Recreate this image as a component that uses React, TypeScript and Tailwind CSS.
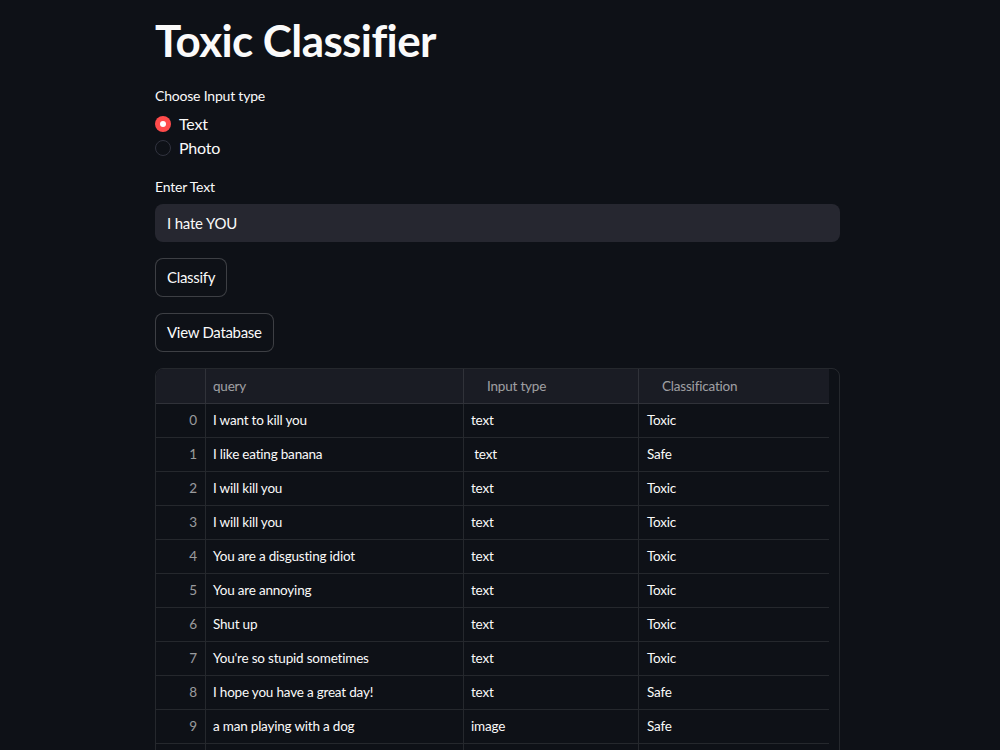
import React from 'react';

interface Row {
  query: string;
  inputType: string;
  label: string;
}

const rows: Row[] = [
  { query: 'I want to kill you', inputType: 'text', label: 'Toxic' },
  { query: 'I like eating banana', inputType: ' text', label: 'Safe' },
  { query: 'I will kill you', inputType: 'text', label: 'Toxic' },
  { query: 'I will kill you', inputType: 'text', label: 'Toxic' },
  { query: 'You are a disgusting idiot', inputType: 'text', label: 'Toxic' },
  { query: 'You are annoying', inputType: 'text', label: 'Toxic' },
  { query: 'Shut up', inputType: 'text', label: 'Toxic' },
  { query: "You're so stupid sometimes", inputType: 'text', label: 'Toxic' },
  { query: 'I hope you have a great day!', inputType: 'text', label: 'Safe' },
  { query: 'a man playing with a dog', inputType: 'image', label: 'Safe' },
];

export default function App() {
  return (
    <div className="min-h-screen h-[750px] overflow-hidden bg-[#0e1117] text-[#fafafa] font-['Source_Sans_Pro','Lato',sans-serif]">
      <div className="w-[685px] ml-[155px] pt-[14px]">
        <h1 className="text-[44px] font-bold leading-[1.2] tracking-[-0.6px] mb-[18px]">Toxic Classifier</h1>

        <div className="text-[14px] tracking-[-0.2px] mb-[8px]">Choose Input type</div>
        <div className="flex flex-col gap-[4px] mb-[18px]">
          <label className="flex items-center gap-[8px] text-[16px] leading-[20px] tracking-[-0.2px]">
            <span className="w-[16px] h-[16px] rounded-full bg-[#ff4b4b] flex items-center justify-center">
              <span className="w-[6px] h-[6px] rounded-full bg-white" />
            </span>
            Text
          </label>
          <label className="flex items-center gap-[8px] text-[16px] leading-[20px] tracking-[-0.2px]">
            <span className="w-[16px] h-[16px] rounded-full border border-[#31333f] bg-[#0e1117]" />
            Photo
          </label>
        </div>

        <div className="text-[14px] tracking-[-0.2px] mb-[7px]">Enter Text</div>
        <div className="h-[38px] rounded-lg bg-[#262730] flex items-center px-[12px] text-[15px] tracking-[-0.2px] mb-[16px]">I hate YOU</div>

        <div className="flex flex-col items-start gap-[16px] mb-[16px]">
          <button className="h-[39px] px-[11px] rounded-lg border border-[#fafafa33] bg-[#0e1117] text-[15px] tracking-[-0.3px]">Classify</button>
          <button className="h-[39px] px-[11px] rounded-lg border border-[#fafafa33] bg-[#0e1117] text-[15px] tracking-[-0.3px]">View Database</button>
        </div>

        <div className="rounded-lg border border-[#fafafa1a] overflow-hidden pr-[10px] text-[13.5px] tracking-[-0.2px]">
          <div className="grid grid-cols-[50px_258px_175px_191px] h-[35px] bg-[#1a1c24] text-[#fafafa99] border-b border-[#fafafa1a]">
            <div className="border-r border-[#fafafa1a]" />
            <div className="flex items-center pl-[7px] border-r border-[#fafafa1a]">query</div>
            <div className="flex items-center pl-[23px] border-r border-[#fafafa1a]">Input type</div>
            <div className="flex items-center pl-[23px]">Classification</div>
          </div>
          {rows.map((r, i) => (
            <div key={i} className="grid grid-cols-[50px_258px_175px_191px] h-[34px] border-b border-[#fafafa1a]">
              <div className="flex items-center justify-end pr-[8px] text-[#fafafa99] border-r border-[#fafafa1a]">{i}</div>
              <div className="flex items-center pl-[7px] border-r border-[#fafafa1a]">{r.query}</div>
              <div className="flex items-center pl-[7px] whitespace-pre border-r border-[#fafafa1a]">{r.inputType}</div>
              <div className="flex items-center pl-[8px]">{r.label}</div>
            </div>
          ))}
          <div className="grid grid-cols-[50px_258px_175px_191px] h-[34px]">
            <div className="border-r border-[#fafafa1a]" />
            <div className="border-r border-[#fafafa1a]" />
            <div className="border-r border-[#fafafa1a]" />
            <div />
          </div>
        </div>
      </div>
    </div>
  );
}
